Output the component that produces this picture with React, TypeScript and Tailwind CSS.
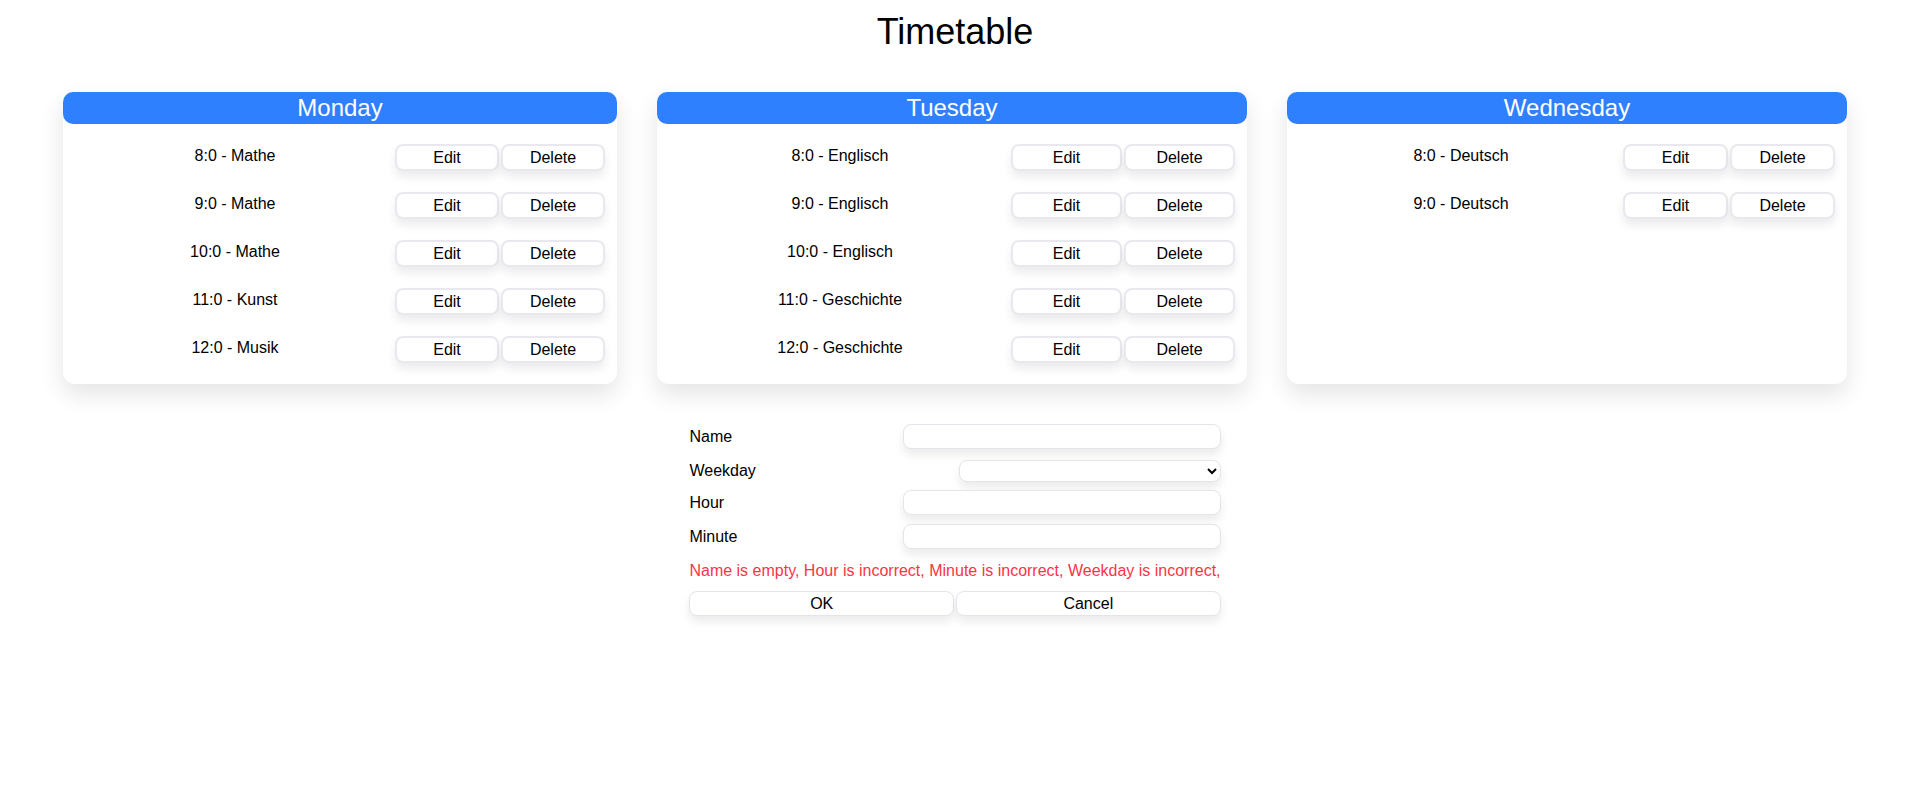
const days = [
  {
    name: "Monday",
    width: "w-[554px]",
    btn: "w-[104px]",
    lessons: ["8:0 - Mathe", "9:0 - Mathe", "10:0 - Mathe", "11:0 - Kunst", "12:0 - Musik"],
  },
  {
    name: "Tuesday",
    width: "w-[590px]",
    btn: "w-[111px]",
    lessons: ["8:0 - Englisch", "9:0 - Englisch", "10:0 - Englisch", "11:0 - Geschichte", "12:0 - Geschichte"],
  },
  {
    name: "Wednesday",
    width: "w-[560px]",
    btn: "w-[105px]",
    lessons: ["8:0 - Deutsch", "9:0 - Deutsch"],
  },
]

const btnCls =
  "h-[27px] rounded-lg border-2 border-[#e8e8ee] bg-white text-base text-black shadow-[0_6px_10px_rgba(0,0,0,0.08)]"

const fieldCls =
  "h-[25px] rounded-lg border border-[#e4e4ea] bg-white shadow-[0_6px_10px_rgba(0,0,0,0.08)]"

export default function App() {
  return (
    <div className="min-h-screen bg-white font-['Liberation_Sans',Arial,sans-serif] text-black">
      <h1 className="mt-3 text-center text-[36px] leading-[40px]">Timetable</h1>

      {/* day cards */}
      <div className="mt-10 flex justify-center gap-10">
        {days.map((d) => (
          <div
            key={d.name}
            className={`${d.width} rounded-xl bg-white pb-[21px] shadow-[0_10px_24px_rgba(0,0,0,0.11)]`}
          >
            <div className="h-8 rounded-[10px] bg-[#2f80ff] text-center text-2xl leading-8 text-white">
              {d.name}
            </div>
            <div className="flex flex-col gap-[21px] px-[12px] pt-5">
              {d.lessons.map((l, i) => (
                <div key={i} className="flex h-[27px] items-start">
                  <p className="flex-1 text-center text-base leading-6">{l}</p>
                  <div className="flex gap-[2px]">
                    <button className={`${btnCls} ${d.btn}`}>Edit</button>
                    <button className={`${btnCls} ${d.btn}`}>Delete</button>
                  </div>
                </div>
              ))}
            </div>
          </div>
        ))}
      </div>

      {/* form */}
      <div className="mx-auto mt-10 flex w-fit flex-col text-base">
        <div className="flex items-center justify-between">
          <label className="leading-6">Name</label>
          <input className={`${fieldCls} w-[318px]`} />
        </div>
        <div className="mt-[10px] flex items-center justify-between">
          <label className="leading-6">Weekday</label>
          <select className="h-[22px] w-[262px] rounded-lg border border-[#e4e4ea] bg-white text-[13px] shadow-[0_6px_10px_rgba(0,0,0,0.08)]">
            <option value=""></option>
            <option>Monday</option>
            <option>Tuesday</option>
            <option>Wednesday</option>
          </select>
        </div>
        <div className="mt-[7px] flex items-center justify-between">
          <label className="leading-6">Hour</label>
          <input className={`${fieldCls} w-[318px]`} />
        </div>
        <div className="mt-[9px] flex items-center justify-between">
          <label className="leading-6">Minute</label>
          <input className={`${fieldCls} w-[318px]`} />
        </div>
        <p className="mt-[10px] leading-6 text-[#ff3347]">
          Name is empty, Hour is incorrect, Minute is incorrect, Weekday is incorrect,
        </p>
        <div className="mt-[8px] flex gap-[2px]">
          <button className={`${fieldCls} flex-1`}>OK</button>
          <button className={`${fieldCls} flex-1`}>Cancel</button>
        </div>
      </div>
    </div>
  )
}
